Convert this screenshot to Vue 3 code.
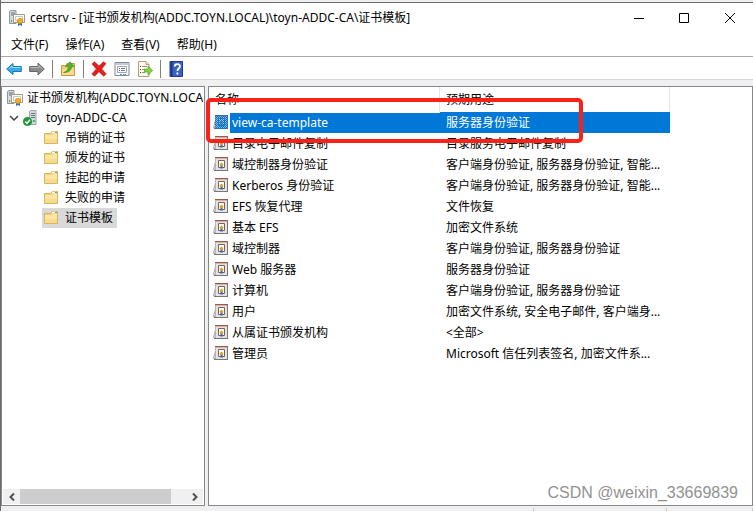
<script setup>
import { ref } from 'vue'

const menus = ['文件(F)', '操作(A)', '查看(V)', '帮助(H)']
const folders = ['吊销的证书', '颁发的证书', '挂起的申请', '失败的申请', '证书模板']
const activeFolder = ref('证书模板')
const selected = ref('view-ca-template')

const templates = [
  ['view-ca-template', '服务器身份验证'],
  ['目录电子邮件复制', '目录服务电子邮件复制'],
  ['域控制器身份验证', '客户端身份验证, 服务器身份验证, 智能...'],
  ['Kerberos 身份验证', '客户端身份验证, 服务器身份验证, 智能...'],
  ['EFS 恢复代理', '文件恢复'],
  ['基本 EFS', '加密文件系统'],
  ['域控制器', '客户端身份验证, 服务器身份验证'],
  ['Web 服务器', '服务器身份验证'],
  ['计算机', '客户端身份验证, 服务器身份验证'],
  ['用户', '加密文件系统, 安全电子邮件, 客户端身...'],
  ['从属证书颁发机构', '<全部>'],
  ['管理员', 'Microsoft 信任列表签名, 加密文件系...'],
]
</script>

<template>
  <div class="window">
    <svg class="defs" width="0" height="0" aria-hidden="true">
      <symbol id="authority" viewBox="0 0 16 16">
        <path d="M.5 1.500 2 .5h5v13H.5z" fill="#d5dce0" stroke="#8b979f" />
        <path d="M2 3h4M2 5h4" stroke="#5b6a74" />
        <path d="M2 11h1" stroke="#31b34a" stroke-width="2" />
        <path d="M4.500 4.500h11v8h-11z" fill="#fffdf6" stroke="#a8977f" />
        <path d="M6.500 6.500h7v4h-7z" fill="#fff" stroke="#cfc8bd" />
        <path d="M9 12v4l2-1 2 1v-4z" fill="#2f6fc4" />
        <circle cx="11" cy="11" r="2.600" fill="#f2b01e" stroke="#c98a10" stroke-width=".8" />
      </symbol>
      <symbol id="server" viewBox="0 0 16 16">
        <path d="M6.500 1.500 8 .5h5v14H6.500z" fill="#d3d9dc" stroke="#9aa4aa" />
        <path d="M8 3.500h4M8 5.500h4M8 7.500h4" stroke="#68747b" />
        <path d="M10 11h2" stroke="#36c65a" stroke-width="2" />
        <circle cx="4.500" cy="11.500" r="4.300" fill="#1d9a35" stroke="#0e7a25" stroke-width=".5" />
        <path d="m2.300 11.500 1.700 1.800 3-3.600" fill="none" stroke="#fff" stroke-width="1.500" />
      </symbol>
      <symbol id="folder" viewBox="0 0 16 16">
        <path d="M1.500 3.500h6l1.500-2h5.500v12h-13z" fill="#f3cf76" stroke="#d9b562" />
        <path d="M9 2.500h4.500" stroke="#fff" stroke-width="1.500" />
        <path d="M12 2.500h2" stroke="#5b9bd5" />
        <path d="M2 5h7l1-1h4v9H2z" fill="#fbe6a6" />
        <path d="M2 9h12v4H2z" fill="#f7da8c" />
      </symbol>
      <symbol id="template" viewBox="0 0 16 16">
        <path d="M2.500 6 .5 13.500h5z" fill="#e8e8e8" stroke="#a5a5a5" />
        <path d="M2 1h13v14H2z" fill="#e3e3e3" />
        <path d="M2 1.500h13" stroke="#9b5c4a" />
        <path d="M2 2.500h12" stroke="#d3b3a8" />
        <path d="M14.500 2v13M1 14.500h14" stroke="#777" />
        <path d="M2.500 3v11" stroke="#b5b5b5" />
        <path d="M5.500 4.500h6v7h-6z" fill="#fff" stroke="#7a6458" />
        <path d="M7.500 9v4l1-.7 1 .7V9z" fill="#315eb3" />
        <path d="M8.500 6.500 10.500 8.500l-2 2-2-2z" fill="#dda019" />
      </symbol>
    </svg>

    <header class="titlebar">
      <svg class="icon"><use href="#authority" /></svg>
      <h1>certsrv - [证书颁发机构(ADDC.TOYN.LOCAL)\toyn-ADDC-CA\证书模板]</h1>
      <div class="controls">
        <button type="button" aria-label="最小化"><svg width="10" height="10"><path d="M0 5.500h10" stroke="#000" /></svg></button>
        <button type="button" aria-label="最大化"><svg width="10" height="10"><path d="M.5.5h9v9h-9z" fill="none" stroke="#000" /></svg></button>
        <button type="button" aria-label="关闭"><svg width="10" height="10"><path d="m0 0 10 10M10 0 0 10" stroke="#000" /></svg></button>
      </div>
    </header>

    <nav class="menubar">
      <button v-for="m in menus" :key="m" type="button">{{ m }}</button>
    </nav>

    <div class="toolbar" role="toolbar">
      <button type="button" aria-label="后退">
        <svg class="icon" viewBox="0 0 16 16"><path d="M.7 8 7 2.500v3h8.300v5H7v3z" fill="#37a9e8" stroke="#1b78b9" /><path d="M3 7.600 6 5v1.500h8.300" fill="none" stroke="#9adcff" /></svg>
      </button>
      <button type="button" aria-label="前进">
        <svg class="icon" viewBox="0 0 16 16"><path d="M15.300 8 9 2v3.500H.7v5H9V14z" fill="#8b8b8b" stroke="#666" /><path d="M1.500 6.500H10V4.500l3 3" fill="none" stroke="#bbb" /></svg>
      </button>
      <i class="rule"></i>
      <button type="button" aria-label="向上一级">
        <svg class="icon" viewBox="0 0 16 16"><path d="M1.500 4.500H6l1-2h7.500v12h-13z" fill="#f0cc72" stroke="#c59b42" /><path d="M2 8h12v6H2z" fill="#f8dd90" /><path d="M3.500 11.500C7 10.500 8.500 8 8.500 5.500h-3L10 .8l4 4.700h-2.500c0 4-3 6.300-8 6z" fill="#4fb32d" stroke="#398b1e" stroke-width=".6" /></svg>
      </button>
      <i class="rule"></i>
      <button type="button" aria-label="删除">
        <svg class="icon" viewBox="0 0 16 16"><path d="M1 3 3.500.8 8 5l4.500-4.200L15 2.500 10.700 8l4.600 5-2.600 2.300L8 10.700l-4.500 4.500L.8 13l4.500-5z" fill="#e2231d" stroke="#b91611" stroke-width=".6" /></svg>
      </button>
      <button type="button" aria-label="属性">
        <svg class="icon" viewBox="0 0 16 16"><path d="M1 1.500h14v13H1z" fill="#f7f9fb" stroke="#7f8b96" /><path d="M1.500 3h13" stroke="#c4ccd3" stroke-width="2" /><path d="M3.500 5.500h9v6h-9z" fill="#fff" stroke="#9ba7b1" /><path d="M5 7.500h1M5 9.500h1" stroke="#2672c8" /><path d="M7 7.500h4M7 9.500h4" stroke="#777" /><path d="M6 13.500h2" stroke="#37a9e8" /><path d="M9 13.500h3" stroke="#8a949c" /></svg>
      </button>
      <button type="button" aria-label="导出列表">
        <svg class="icon" viewBox="0 0 16 16"><path d="M1.500.5H9l3 3v12H1.500z" fill="#fffbe8" stroke="#aaa084" /><path d="M9 .5v3h3" fill="#eee3bd" stroke="#aaa084" /><path d="M3 5.500h1M3 8.500h1M3 11.500h1" stroke="#333" /><path d="M5 5.500h5M5 8.500h3M5 11.500h3" stroke="#8c8a9c" /><path d="M7.500 8H11V5l4.700 4.500L11 14v-3H7.500z" fill="#7ed148" stroke="#4ea71e" stroke-width=".7" /></svg>
      </button>
      <i class="rule"></i>
      <button type="button" aria-label="帮助">
        <svg class="icon" viewBox="0 0 16 16"><path d="M2 .5h12.500v15H2z" fill="#3c62c4" stroke="#203b8e" /><path d="M3.500 1v14" stroke="#1e3583" stroke-width="2" /><path d="M6.800 5.500C6.800 2.300 12 2.400 12 5.300 12 7.600 9.400 7.500 9.400 10M9.400 11.500v2" fill="none" stroke="#fff" stroke-width="1.800" /></svg>
      </button>
    </div>

    <main class="panes">
      <aside class="pane tree">
        <ul>
          <li class="node root"><svg class="icon"><use href="#authority" /></svg><span>证书颁发机构(ADDC.TOYN.LOCAL)</span></li>
          <li>
            <div class="node ca">
              <svg class="chevron" viewBox="0 0 10 10"><path d="m1 3 4 4 4-4" fill="none" stroke="#404040" stroke-width="1.500" /></svg>
              <svg class="icon"><use href="#server" /></svg><span>toyn-ADDC-CA</span>
            </div>
            <ul class="children">
              <li v-for="f in folders" :key="f">
                <button type="button" class="node folder" :class="{ active: f === activeFolder }" @click="activeFolder = f">
                  <svg class="icon"><use href="#folder" /></svg><span>{{ f }}</span>
                </button>
              </li>
            </ul>
          </li>
        </ul>
        <div class="scrollbar">
          <button type="button" aria-label="向左滚动"><svg width="8" height="8"><path d="M6 .5 2.500 4 6 7.500" fill="none" stroke="#505050" stroke-width="2" /></svg></button>
          <div class="track"><div class="thumb"></div></div>
          <button type="button" aria-label="向右滚动"><svg width="8" height="8"><path d="M2 .5 5.500 4 2 7.500" fill="none" stroke="#505050" stroke-width="2" /></svg></button>
        </div>
      </aside>

      <section class="pane list">
        <table>
          <colgroup><col class="name" /><col class="purpose" /><col /></colgroup>
          <thead>
            <tr><th>名称</th><th>预期用途</th><td></td></tr>
          </thead>
          <tbody>
            <tr v-for="[name, purpose] in templates" :key="name" :class="{ selected: name === selected }" @click="selected = name">
              <td>
                <div class="entry"><span class="badge"><svg class="icon"><use href="#template" /></svg></span><span class="label">{{ name }}</span></div>
              </td>
              <td class="use">{{ purpose }}</td>
              <td></td>
            </tr>
          </tbody>
        </table>
        <div class="highlight"></div>
        <p class="watermark">CSDN @weixin_33669839</p>
      </section>
    </main>

    <footer class="status"><i class="first"></i><i class="second"></i><i></i></footer>
  </div>
</template>

<style>
body {
  margin: 0;
  background: #f0f0f0;
}
</style>

<style scoped>
.window {
  box-sizing: border-box;
  display: flex;
  flex-direction: column;
  min-height: 100vh;
  padding-top: 2px;
  border-left: 1px solid #6b6b6b;
  background: #f0f0f0;
  color: #000;
  font: 12px/20px "Noto Sans", "Noto Sans CJK SC", sans-serif;
}
.defs {
  position: absolute;
}
button {
  display: flex;
  align-items: center;
  justify-content: center;
  margin: 0;
  padding: 0;
  border: 0;
  background: none;
  color: inherit;
  font: inherit;
}
ul {
  margin: 0;
  padding: 0;
  list-style: none;
}
.icon {
  flex: none;
  display: block;
  width: 16px;
  height: 16px;
}
.titlebar {
  display: flex;
  align-items: center;
  gap: 5px;
  height: 30px;
  padding-left: 8px;
  border-top: 1px solid #6b6b6b;
  background: #fff;
}
h1 {
  flex: 1;
  margin: 0;
  font-size: 12px;
  font-weight: 400;
  white-space: nowrap;
}
.controls {
  display: flex;
}
.controls button {
  width: 46px;
  height: 28px;
}
.controls button:first-child {
  width: 44px;
}
.menubar {
  display: flex;
  gap: 17px;
  height: 23px;
  padding-left: 10px;
  border-bottom: 1px solid #a8a8a8;
  background: #fff;
}
.menubar button {
  height: 24px;
  white-space: nowrap;
}
.toolbar {
  box-sizing: border-box;
  display: flex;
  align-items: center;
  gap: 7px;
  height: 23px;
  padding: 1px 0 0 5px;
  margin-bottom: 6px;
  border-bottom: 1px solid #d8d8d8;
  background: #fff;
}
.rule {
  width: 1px;
  height: 18px;
  background: #808080;
}
.panes {
  flex: 1;
  display: flex;
  gap: 3px;
}
.pane {
  box-sizing: border-box;
  border: 1px solid #828790;
  background: #fff;
}
.tree {
  flex: none;
  display: flex;
  flex-direction: column;
  justify-content: space-between;
  width: 204px;
  padding: 1px;
}
.node {
  display: flex;
  align-items: center;
  height: 20px;
  white-space: nowrap;
}
.root {
  gap: 4px;
  padding-left: 4px;
  overflow: hidden;
}
.ca {
  gap: 4px;
  padding-left: 6px;
}
.ca span {
  padding-left: 3px;
}
.chevron {
  width: 10px;
  height: 10px;
}
.children {
  padding-left: 39px;
}
.folder {
  gap: 6px;
  padding: 0 4px 0 1px;
}
.active {
  background: #d9d9d9;
}
.scrollbar {
  display: flex;
  height: 15px;
  background: #f0f0f0;
}
.scrollbar button {
  width: 17px;
}
.track {
  flex: 1;
}
.thumb {
  width: 91%;
  height: 100%;
  background: #cdcdcd;
}
.list {
  position: relative;
  flex: 1;
  min-width: 0;
}
table {
  width: 100%;
  table-layout: fixed;
  border-collapse: separate;
  border-spacing: 0;
}
.name {
  width: 231px;
}
.purpose {
  width: 230px;
}
th,
td {
  height: 21px;
  padding: 0;
  text-align: left;
  font-weight: 400;
  white-space: nowrap;
}
th {
  height: 25px;
  padding-left: 6px;
  border-right: 1px solid #e5e5e5;
}
.entry {
  display: flex;
  align-items: center;
  height: 21px;
}
.badge {
  padding: 0 1px 2px 4px;
}
.label {
  flex: 1;
  padding-left: 2px;
}
.use {
  padding-left: 6px;
}
.selected .label,
.selected .use {
  background: #0078d7;
  color: #fff;
}
.selected .badge {
  position: relative;
}
.selected .badge::after {
  content: "";
  position: absolute;
  inset: 1px 2px 3px 6px;
  background: repeating-conic-gradient(#0078d7 0 25%, #0078d766 0 50%) 0 0 / 2px 2px;
}
.highlight {
  box-sizing: border-box;
  position: absolute;
  top: 11px;
  left: -3px;
  width: 377px;
  height: 45px;
  border: 4px solid #fa2117;
  border-radius: 5px;
}
.watermark {
  position: absolute;
  right: 14px;
  bottom: 2px;
  margin: 0;
  color: #929292;
  font: 16px/20px "Liberation Sans", sans-serif;
}
.status {
  display: flex;
  justify-content: flex-end;
  height: 3px;
  padding-top: 2px;
}
.status i {
  width: 1px;
  background: #c8c8c8;
}
.status .first {
  margin-right: 132px;
}
.status .second {
  margin-right: 85px;
}
</style>
